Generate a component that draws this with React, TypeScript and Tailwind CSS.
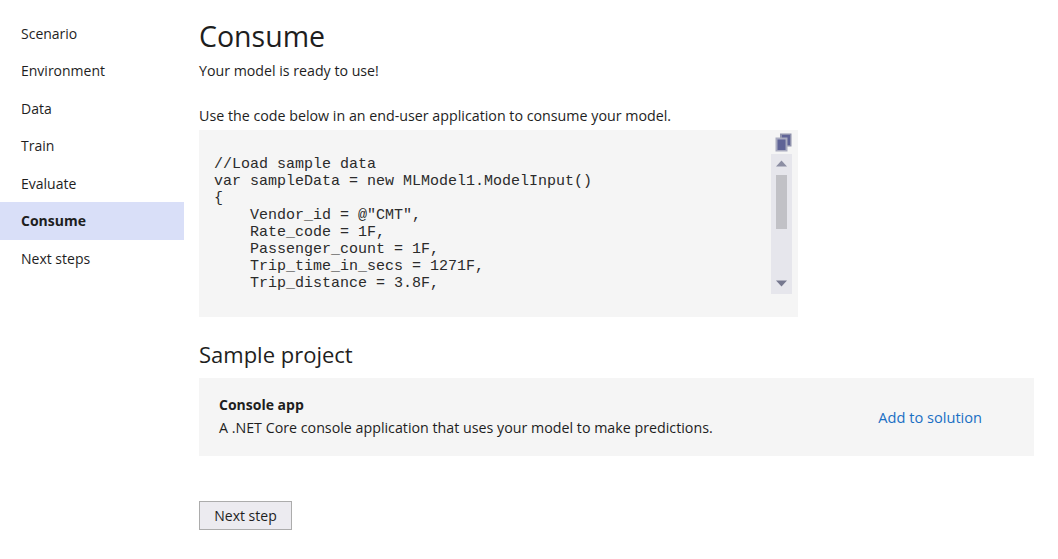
import { useState } from "react";

const steps = ["Scenario", "Environment", "Data", "Train", "Evaluate", "Consume", "Next steps"];

const code = `//Load sample data
var sampleData = new MLModel1.ModelInput()
{
    Vendor_id = @"CMT",
    Rate_code = 1F,
    Passenger_count = 1F,
    Trip_time_in_secs = 1271F,
    Trip_distance = 3.8F,`;

function CopyIcon() {
  return (
    <svg width="17" height="19" viewBox="0 0 17 19" className="block">
      <rect x="5" y="0.5" width="11.5" height="13" fill="#8f92ac" />
      <rect x="7" y="2" width="8" height="10" fill="#5f6396" />
      <rect x="0.5" y="4.5" width="12" height="14" fill="#a9abc0" />
      <rect x="2.5" y="6.5" width="8" height="10.5" fill="#5f6396" />
    </svg>
  );
}

function Scrollbar() {
  return (
    <div className="flex h-[140px] w-[21px] flex-col items-center bg-[#e6e6ec]">
      <svg width="13" height="7" viewBox="0 0 13 7" className="mt-[6px] shrink-0">
        <path d="M6.5 0.5 L12 6.5 L1 6.5 Z" fill="#8c8ea3" />
      </svg>
      <div className="mt-[8px] h-[54px] w-[11px] bg-[#c1c1c6]" />
      <svg width="13" height="7" viewBox="0 0 13 7" className="mt-auto mb-[7px] shrink-0">
        <path d="M1 0.5 L12 0.5 L6.5 6.5 Z" fill="#76788f" />
      </svg>
    </div>
  );
}

export default function App() {
  const [active] = useState("Consume");

  return (
    <div className="flex h-[559px] w-[1058px] overflow-hidden bg-white font-['Open_Sans','Noto_Sans',sans-serif] text-[14px] text-[#1e1e1e]">
      <nav className="w-[184px] shrink-0 pt-[14.5px]">
        {steps.map((step) => (
          <div
            key={step}
            className={
              step === active
                ? "flex h-[37.5px] items-center bg-[#d9dff8] pl-[21px] font-bold"
                : "flex h-[37.5px] items-center pl-[21px]"
            }
          >
            {step}
          </div>
        ))}
      </nav>

      <main className="ml-[15px] flex w-[835px] flex-col pt-[18px]">
        <h1 className="text-[28.5px] leading-[37px] font-normal">Consume</h1>
        <p className="mt-[6px] text-[14.2px] leading-[20px]">Your model is ready to use!</p>
        <p className="mt-[25px] text-[14.25px] leading-[20px]">Use the code below in an end-user application to consume your model.</p>

        <div className="mt-[4px] flex h-[187px] w-[599px] justify-between bg-[#f5f5f5] pr-[6px]">
          <pre className="pt-[26px] pl-[15px] font-['Liberation_Mono',monospace] text-[15px] leading-[17px] text-[#2b2b2b]">{code}</pre>
          <div className="flex flex-col items-end pt-[3px]">
            <CopyIcon />
            <div className="mt-[2px]">
              <Scrollbar />
            </div>
          </div>
        </div>

        <h2 className="mt-[23px] text-[22px] leading-[28px] font-normal">Sample project</h2>

        <div className="mt-[10px] flex h-[78px] items-center justify-between bg-[#f5f5f5] pr-[52px] pl-[20px]">
          <div className="mb-[2px]">
            <div className="leading-[22px] font-bold">Console app</div>
            <div className="mt-[1px] text-[14.25px] leading-[22px]">A .NET Core console application that uses your model to make predictions.</div>
          </div>
          <a className="mt-[1px] text-[14.6px] text-[#1a6fc4]">Add to solution</a>
        </div>

        <button className="mt-[45px] h-[29px] w-[93px] border border-[#acacac] bg-[#ecebf0] text-[#1e1e1e]">Next step</button>
      </main>
    </div>
  );
}
